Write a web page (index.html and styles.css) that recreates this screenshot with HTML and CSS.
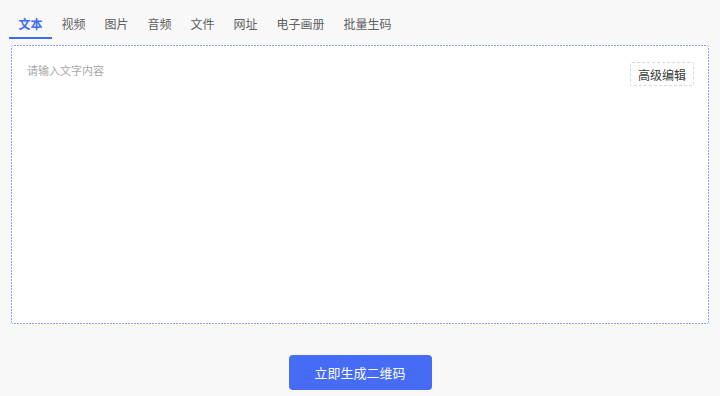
FILE: index.html
```html
<!DOCTYPE html>
<html lang="zh">
<head>
<meta charset="utf-8">
<link rel="stylesheet" href="styles.css">
</head>
<body>
<div class="page">
  <nav class="tabs">
    <span class="tab active">文本</span>
    <span class="tab">视频</span>
    <span class="tab">图片</span>
    <span class="tab">音频</span>
    <span class="tab">文件</span>
    <span class="tab">网址</span>
    <span class="tab">电子画册</span>
    <span class="tab">批量生码</span>
  </nav>
  <div class="editor">
    <div class="editor-head">
      <span class="placeholder">请输入文字内容</span>
      <button class="adv">高级编辑</button>
    </div>
  </div>
  <div class="actions">
    <button class="primary">立即生成二维码</button>
  </div>
</div>
</body>
</html>
```
FILE: styles.css
```css
* { box-sizing: border-box; }
html, body { margin: 0; padding: 0; background: #f8f8f9; }
body {
  font-family: "Noto Sans CJK SC", "Noto Sans", sans-serif;
  width: 720px;
  height: 396px;
  overflow: hidden;
}
.page { padding: 13px 11px 0 11px; }
.tabs {
  display: flex;
  margin-left: -2px;
}
.tab {
  font-size: 12px;
  line-height: 22px;
  padding: 0 9.5px 2px 9.5px;
  color: #5f5f5f;
  border-bottom: 2px solid transparent;
  white-space: nowrap;
}
.tab.active {
  color: #3f6af5;
  font-weight: bold;
  border-bottom-color: #3f6af5;
}
.editor {
  margin-top: 6px;
  height: 279px;
  border-radius: 3px;
  padding: 17px 16px 0 16px;
  background:
    repeating-linear-gradient(90deg, #8ba4f7 0 2px, transparent 2px 3px) left top / 100% 1px no-repeat,
    repeating-linear-gradient(90deg, #8ba4f7 0 2px, transparent 2px 3px) left bottom / 100% 1px no-repeat,
    repeating-linear-gradient(180deg, #8ba4f7 0 2px, transparent 2px 3px) left top / 1px 100% no-repeat,
    repeating-linear-gradient(180deg, #8ba4f7 0 2px, transparent 2px 3px) right top / 1px 100% no-repeat,
    #fff;
}
.editor-head {
  display: flex;
  justify-content: space-between;
  align-items: flex-start;
}
.placeholder {
  font-size: 11px;
  color: #a8a8a8;
  line-height: 16px;
}
.adv {
  font-family: inherit;
  font-size: 12px;
  color: #3a3a3a;
  background: #fff;
  border: 1px dashed #d9d9d9;
  border-radius: 2px;
  padding: 0;
  height: 24px;
  width: 64px;
  white-space: nowrap;
  margin-right: -1px;
}
.actions {
  display: flex;
  justify-content: center;
  margin-top: 31px;
}
.primary {
  font-family: inherit;
  width: 143px;
  height: 35px;
  border: none;
  border-radius: 4px;
  background: #466cf6;
  color: #fff;
  font-size: 13px;
}
```
